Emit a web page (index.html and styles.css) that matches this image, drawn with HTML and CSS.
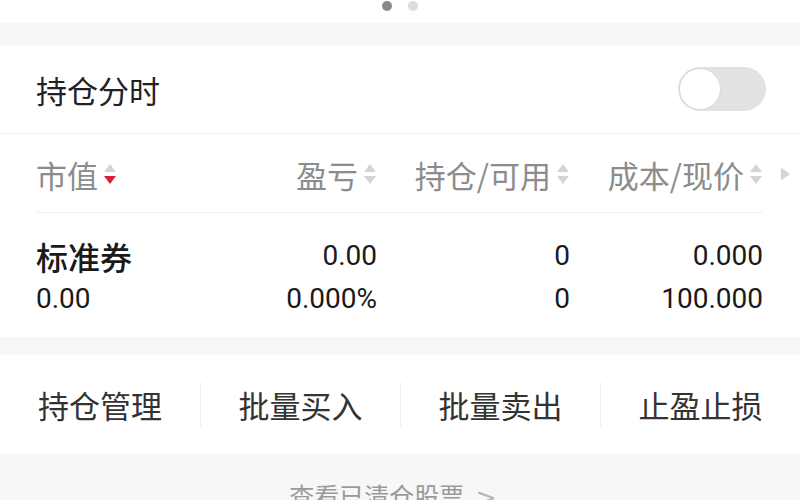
FILE: index.html
```html
<!DOCTYPE html>
<html lang="zh">
<head>
<meta charset="utf-8">
<link rel="stylesheet" href="styles.css">
</head>
<body>
<div class="dots"><span class="dot on"></span><span class="dot"></span></div>
<div class="band"></div>
<div class="panel">
  <div class="head">
    <span class="head-title">持仓分时</span>
    <span class="toggle"><span class="knob"></span></span>
  </div>
  <div class="thead">
    <div class="th left">市值<svg class="sort" viewBox="0 0 14 24"><path d="M7 2 L13 10 L1 10 Z" fill="#d4d4d4"/><path d="M7 22 L13 14 L1 14 Z" fill="#d6213b"/></svg></div>
    <div class="th">盈亏<svg class="sort" viewBox="0 0 14 24"><path d="M7 2 L13 10 L1 10 Z" fill="#d4d4d4"/><path d="M7 22 L13 14 L1 14 Z" fill="#d4d4d4"/></svg></div>
    <div class="th">持仓/可用<svg class="sort" viewBox="0 0 14 24"><path d="M7 2 L13 10 L1 10 Z" fill="#d4d4d4"/><path d="M7 22 L13 14 L1 14 Z" fill="#d4d4d4"/></svg></div>
    <div class="th">成本/现价<svg class="sort" viewBox="0 0 14 24"><path d="M7 2 L13 10 L1 10 Z" fill="#d4d4d4"/><path d="M7 22 L13 14 L1 14 Z" fill="#d4d4d4"/></svg></div>
    <svg class="more" viewBox="0 0 12 14"><path d="M1 0 L11 7 L1 14 Z" fill="#d4d4d4"/></svg>
  </div>
  <div class="tbody">
    <div class="td left name">标准券</div>
    <div class="td">0.00</div>
    <div class="td">0</div>
    <div class="td">0.000</div>
    <div class="td left">0.00</div>
    <div class="td">0.000%</div>
    <div class="td">0</div>
    <div class="td">100.000</div>
  </div>
</div>
<div class="band2"></div>
<div class="actions">
  <div class="act">持仓管理</div>
  <div class="act">批量买入</div>
  <div class="act">批量卖出</div>
  <div class="act">止盈止损</div>
</div>
<div class="foot">
  <span class="foot-link">查看已清仓股票 <span class="chev">&gt;</span></span>
</div>
</body>
</html>
```
FILE: styles.css
```css
html, body {
  margin: 0;
  padding: 0;
  background: #ffffff;
}
body {
  width: 800px;
  height: 500px;
  overflow: hidden;
  font-family: Roboto, "Noto Sans CJK SC", sans-serif;
  color: #1f1f1f;
}
.dots {
  height: 23px;
  display: flex;
  justify-content: center;
  gap: 16px;
  padding-top: 1px;
  box-sizing: border-box;
}
.dot {
  width: 10px;
  height: 10px;
  border-radius: 50%;
  background: #dddddd;
}
.dot.on {
  background: #8a8a8a;
}
.band {
  height: 22px;
  background: #f7f7f7;
}
.panel {
  position: relative;
}
.head {
  height: 88px;
  display: flex;
  align-items: center;
  justify-content: space-between;
  padding: 0 34px 0 36px;
  border-bottom: 1px solid #efefef;
}
.head-title {
  font-family: "Noto Sans CJK SC", sans-serif;
  font-size: 31px;
  color: #222222;
}
.toggle {
  width: 88px;
  height: 44px;
  border-radius: 22px;
  background: #e2e2e2;
  position: relative;
}
.knob {
  position: absolute;
  left: 2px;
  top: 2px;
  width: 40px;
  height: 40px;
  border-radius: 50%;
  background: #ffffff;
  box-shadow: 0 0 0 1px #d8d8d8;
}
.thead {
  position: relative;
  display: grid;
  grid-template-columns: 148px 193px 193px 193px;
  height: 78px;
  margin: 0 37px 0 36px;
  align-items: center;
  border-bottom: 1px solid #f0f0f0;
}
.th {
  display: flex;
  align-items: center;
  justify-content: flex-end;
  font-family: "Noto Sans CJK SC", sans-serif;
  font-size: 31px;
  color: #8c8c8c;
  padding-top: 2px;
}
.th.left {
  justify-content: flex-start;
}
.sort {
  width: 14px;
  height: 24px;
  margin-left: 5px;
}
.more {
  position: absolute;
  right: -28px;
  top: 33px;
  width: 11px;
  height: 14px;
}
.tbody {
  display: grid;
  grid-template-columns: 148px 193px 193px 193px;
  grid-auto-rows: 43px;
  margin: 0 37px 0 36px;
  padding: 21px 0 17px;
  align-items: center;
}
.td {
  text-align: right;
  font-size: 28px;
  color: #1a1a1a;
}
.td.left {
  text-align: left;
}
.td.name {
  font-family: "Noto Sans CJK SC", sans-serif;
  font-size: 32px;
  font-weight: 500;
  color: #1a1a1a;
}
.band2 {
  height: 18px;
  background: #f7f7f7;
}
.actions {
  display: grid;
  grid-template-columns: repeat(4, 1fr);
  height: 99px;
  align-items: center;
}
.act {
  font-family: "Noto Sans CJK SC", sans-serif;
  font-size: 31px;
  color: #333333;
  text-align: center;
  line-height: 46px;
  border-left: 1px solid #f1f1f1;
}
.act:first-child {
  border-left: none;
}
.foot {
  height: 60px;
  background: #f7f7f7;
  text-align: center;
  padding-top: 23px;
  box-sizing: border-box;
}
.foot-link {
  font-family: "Noto Sans CJK SC", sans-serif;
  font-size: 25px;
  color: #9a9a9a;
  margin-left: -14px;
}
.chev {
  font-family: "DejaVu Sans", sans-serif;
  color: #b5b5b5;
  margin-left: 6px;
}
```
